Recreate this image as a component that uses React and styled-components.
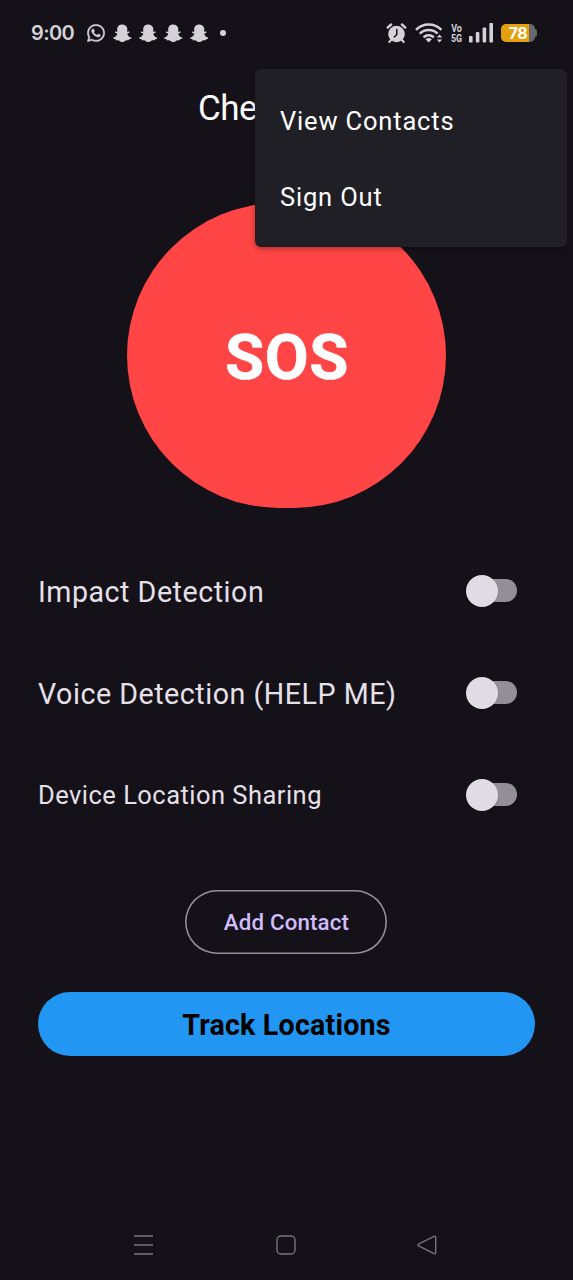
import React from "react";
import styled, { createGlobalStyle } from "styled-components";
import { FaWhatsapp } from "react-icons/fa6";
import { FaSnapchatGhost } from "react-icons/fa";

const GlobalStyle = createGlobalStyle`
  * { box-sizing: border-box; }
  body { margin: 0; background: #141118; }
  button { font: inherit; border: 0; padding: 0; }
`;

const Screen = styled.div`
  position: relative;
  width: 573px;
  height: 1280px;
  display: flex;
  flex-direction: column;
  overflow: hidden;
  background: #141118;
  color: #e6e0e9;
  font-family: Roboto, "Liberation Sans", sans-serif;
`;

const StatusBar = styled.header`
  height: 66px;
  padding: 0 36px 0 31px;
  display: flex;
  align-items: center;
  justify-content: space-between;
  color: #d4d2d6;
`;

const StatusGroup = styled.div`
  display: flex;
  align-items: center;
  gap: ${(p) => p.$gap || 0}px;
`;

const Clock = styled.span`
  width: 48px;
  font-family: Inter, sans-serif;
  font-size: 20px;
  font-weight: 600;
  letter-spacing: -0.6px;
`;

const WhatsappIcon = styled(FaWhatsapp)`
  stroke: currentColor;
  stroke-width: 10px;
  overflow: visible;
`;

const Dot = styled.span`
  width: 6px;
  height: 6px;
  margin-left: 5px;
  border-radius: 50%;
  background: currentColor;
`;

const NetworkLabel = styled.span`
  width: 13px;
  margin-right: -1px;
  text-align: center;
  font-size: 10.5px;
  font-weight: 700;
  line-height: 8.5px;
  transform: scale(0.85, 1.12);
`;

const Battery = styled.div`
  width: 34px;
  height: 18px;
  display: flex;
  align-items: center;
  justify-content: center;
  border-radius: 5px;
  background: linear-gradient(90deg, #e5a10d 0 28px, #68666f 28px);
  color: #fff;
  font-family: Inter, sans-serif;
  font-size: 16px;
  font-weight: 700;
  letter-spacing: -0.6px;
`;

const BatteryCap = styled.span`
  width: 2px;
  height: 8px;
  border-radius: 0 2px 2px 0;
  background: #5c6b55;
`;

const AppBar = styled.div`
  height: 84px;
  padding-left: 198px;
`;

const Title = styled.h1`
  margin: 0;
  font-size: 35px;
  font-weight: 400;
  line-height: 86px;
  letter-spacing: -0.5px;
  color: #fff;
`;

const Main = styled.main`
  flex: 1;
  display: flex;
  flex-direction: column;
  align-items: center;
  padding: 53px 38px 0;
`;

const SosButton = styled.button`
  width: 319px;
  height: 305px;
  padding: 3px 0 0 1px;
  border-radius: 153px;
  background: #ff4545;
  color: #fff;
  font-size: 63.7px;
  font-weight: 700;
  letter-spacing: 0.5px;
  -webkit-text-stroke: 0.6px currentColor;
`;

const SettingList = styled.div`
  align-self: stretch;
  margin-top: 31.5px;
`;

const SettingRow = styled.label`
  height: 102px;
  padding-right: 18px;
  display: flex;
  align-items: center;
  justify-content: space-between;
  font-size: ${(p) => (p.$large ? 28.65 : 25.5)}px;
  letter-spacing: ${(p) => (p.$large ? 0.51 : 0.47)}px;
`;

const SettingText = styled.span`
  padding-top: ${(p) => (p.$large ? 2.2 : 1.6)}px;
`;

const SwitchTrack = styled.span`
  width: 47px;
  height: 23px;
  display: flex;
  align-items: center;
  border-radius: 12px;
  background: #938f99;
`;

const SwitchThumb = styled.span`
  width: 32px;
  height: 32px;
  flex: none;
  margin-left: -4px;
  border-radius: 50%;
  background: #e1dce4;
  box-shadow: 0 1px 2px rgba(0, 0, 0, 0.15);
`;

const OutlineButton = styled.button`
  width: 202px;
  height: 63.5px;
  margin: 44.5px 1px 0 0;
  padding-left: 1px;
  border-radius: 32px;
  background: transparent;
  box-shadow: inset 0 0 0 1.6px #938f99;
  color: #d0bcff;
  font-size: 22.3px;
  font-weight: 500;
  letter-spacing: 0.16px;
`;

const TrackButton = styled.button`
  width: 497px;
  height: 63.5px;
  margin-top: 38.5px;
  padding-top: 2px;
  border-radius: 32px;
  background: #2196f3;
  color: #000;
  font-size: 28.65px;
  font-weight: 700;
  letter-spacing: 0.2px;
`;

const Menu = styled.div`
  position: absolute;
  top: 69px;
  left: 255px;
  width: 312px;
  height: 178px;
  padding: 14px 25px 12px;
  border-radius: 6px;
  background: #211f26;
  box-shadow: 0 2px 5px rgba(0, 0, 0, 0.3);
`;

const MenuItem = styled.div`
  height: 76px;
  display: flex;
  align-items: center;
  color: #fff;
  font-size: 25.5px;
  letter-spacing: 0.82px;
`;

const NavBar = styled.nav`
  height: 70px;
  padding: 0 136px 0 133px;
  display: flex;
  align-items: center;
  justify-content: space-between;
  color: #77747b;
`;

const AlarmIcon = () => (
  <svg width="22" height="22" viewBox="0 0 22 22">
    <circle cx="10.500" cy="12" r="8.300" fill="currentColor" />
    <path d="M1.700 5.600 5.100 2.500M19.300 5.600 15.900 2.500" stroke="currentColor" strokeWidth="2.400" strokeLinecap="round" />
    <path d="m5 18-1.700 2M16 18l1.700 2" stroke="currentColor" strokeWidth="2" strokeLinecap="round" />
    <path d="M10.800 7.500V12.500L8.300 15" fill="none" stroke="#141118" strokeWidth="1.500" strokeLinecap="round" />
  </svg>
);

const WifiIcon = () => (
  <svg width="28" height="22" viewBox="0 0 28 22" fill="none" stroke="currentColor">
    <path d="M1 7.800C8 .8 19.400.8 26.400 7.800" strokeWidth="2.500" />
    <path d="M4.800 11.700c5-4.800 12.800-4.800 17.800 0" strokeWidth="2.500" />
    <path d="M8.500 15.300c3-2.800 7.400-2.800 10.400 0" strokeWidth="2.400" />
    <path d="m13.700 20.500-3.200-3.300c1.900-1.700 4.500-1.700 6.400 0Z" fill="currentColor" stroke="none" />
    <path d="m21.800 15.500 2.700-3 2.700 3ZM21.800 17.500l2.700 3 2.700-3Z" fill="currentColor" stroke="none" />
  </svg>
);

const SignalIcon = () => (
  <svg width="25" height="20" viewBox="0 0 25 20" fill="currentColor">
    <rect x="0" y="13" width="3.600" height="6.500" rx="1" />
    <rect x="6.800" y="9" width="3.600" height="10.500" rx="1" />
    <rect x="13.600" y="4.500" width="3.600" height="15" rx="1" />
    <rect x="20.400" y="0" width="3.600" height="19.500" rx="1" />
  </svg>
);

const RecentsIcon = () => (
  <svg width="21" height="22" viewBox="0 0 21 22" stroke="currentColor" strokeWidth="1.600">
    <path d="M1 2h19M1 11h19M1 20h19" />
  </svg>
);

const HomeIcon = () => (
  <svg width="20" height="20" viewBox="0 0 20 20" fill="none" stroke="currentColor" strokeWidth="1.400">
    <rect x="1" y="1" width="18" height="18" rx="4" />
  </svg>
);

const BackIcon = () => (
  <svg width="20" height="20" viewBox="0 0 20 20" fill="none" stroke="currentColor" strokeWidth="1.400" strokeLinejoin="round">
    <path d="M1.600 9.100 17 1.300Q18.700.7 18.700 2.400V17.600Q18.700 19.300 17 18.700L1.600 10.900Q.2 10 1.600 9.100Z" />
  </svg>
);

const settings = [
  { label: "Impact Detection", large: true },
  { label: "Voice Detection (HELP ME)", large: true },
  { label: "Device Location Sharing", large: false },
];

export default function App() {
  return (
    <Screen>
      <GlobalStyle />
      <StatusBar>
        <StatusGroup $gap={7}>
          <Clock>9:00</Clock>
          <WhatsappIcon size={20} />
          {[0, 1, 2, 3].map((n) => (
            <FaSnapchatGhost key={n} size={18.5} />
          ))}
          <Dot />
        </StatusGroup>
        <StatusGroup $gap={7}>
          <AlarmIcon />
          <WifiIcon />
          <NetworkLabel>Vo 5G</NetworkLabel>
          <SignalIcon />
          <StatusGroup>
            <Battery>78</Battery>
            <BatteryCap />
          </StatusGroup>
        </StatusGroup>
      </StatusBar>
      <AppBar>
        <Title>Che</Title>
      </AppBar>
      <Main>
        <SosButton>SOS</SosButton>
        <SettingList>
          {settings.map((item) => (
            <SettingRow key={item.label} $large={item.large}>
              <SettingText $large={item.large}>{item.label}</SettingText>
              <SwitchTrack>
                <SwitchThumb />
              </SwitchTrack>
            </SettingRow>
          ))}
        </SettingList>
        <OutlineButton>Add Contact</OutlineButton>
        <TrackButton>Track Locations</TrackButton>
      </Main>
      <NavBar>
        <RecentsIcon />
        <HomeIcon />
        <BackIcon />
      </NavBar>
      <Menu>
        <MenuItem>View Contacts</MenuItem>
        <MenuItem>Sign Out</MenuItem>
      </Menu>
    </Screen>
  );
}
